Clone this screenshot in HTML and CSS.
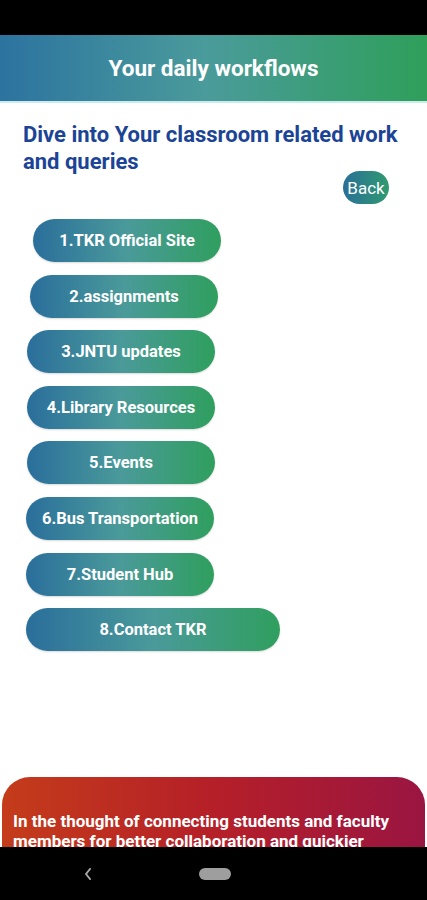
FILE: index.html
```html
<!DOCTYPE html>
<html lang="en">

<head>
    <meta charset="UTF-8">
    <meta name="viewport" content="width=device-width, initial-scale=1.0">
    <title>Your daily workflows</title>
    <link rel="stylesheet" href="styles.css">
</head>

<body>
    <div class="status-bar"></div>

    <header class="top-bar">
        <h1>Your daily workflows</h1>
    </header>

    <h2 class="intro">Dive into Your classroom related work and queries</h2>

    <div class="back-row">
        <button class="back-btn">Back</button>
    </div>

    <div class="links">
        <button class="link-btn">1.TKR Official Site</button>
        <button class="link-btn">2.assignments</button>
        <button class="link-btn">3.JNTU updates</button>
        <button class="link-btn">4.Library Resources</button>
        <button class="link-btn">5.Events</button>
        <button class="link-btn">6.Bus Transportation</button>
        <button class="link-btn">7.Student Hub</button>
        <button class="link-btn wide">8.Contact TKR</button>
    </div>

    <div class="about-card">
        <p>In the thought of connecting students and faculty members for better collaboration and quickier communication between them.</p>
    </div>

    <nav class="nav-bar">
        <svg class="nav-back" width="8" height="12" viewBox="0 0 8 12">
            <path d="M6 1 L2 6 L6 11" fill="none" stroke="#a8a8a8" stroke-width="2" stroke-linecap="round" stroke-linejoin="round"/>
        </svg>
        <span class="nav-home"></span>
    </nav>
</body>

</html>
```

FILE: styles.css
```css
body {
    margin: 0;
    padding: 0;
    background-color: #ffffff;
    font-family: Roboto, "Liberation Sans", sans-serif;
    overflow: hidden;
}

.status-bar {
    height: 35px;
    background-color: #000000;
}

.top-bar {
    height: 66px;
    background: linear-gradient(90deg, #2c73a0 0%, #4a9b9b 48%, #2f9f5a 100%);
    border-bottom: 2px solid #c9ecef;
    display: flex;
    align-items: center;
    justify-content: center;
}

.top-bar h1 {
    margin: 0;
    color: #ffffff;
    font-size: 22.5px;
    font-weight: 700;
}

.intro {
    margin: 18px 18px 0 23px;
    color: #1c4496;
    font-size: 22px;
    font-weight: 700;
    line-height: 27px;
}

.back-row {
    display: flex;
    justify-content: flex-end;
    padding-right: 38px;
    margin-top: -4px;
}

.back-btn {
    width: 46px;
    height: 33px;
    border: none;
    border-radius: 17px;
    background: linear-gradient(90deg, #2a6f98, #2f9a70);
    color: #ffffff;
    font-family: Roboto, "Liberation Sans", sans-serif;
    font-size: 17px;
    padding: 0;
}

.links {
    display: flex;
    flex-direction: column;
    align-items: flex-start;
    gap: 12.6px;
    margin-top: 15px;
}

.link-btn {
    width: 188px;
    height: 43px;
    border: none;
    border-radius: 22px;
    background: linear-gradient(90deg, #2a6e9b 0%, #4a9a9a 50%, #2f9f5e 100%);
    color: #ffffff;
    font-family: Roboto, "Liberation Sans", sans-serif;
    font-size: 16.5px;
    font-weight: 700;
    padding: 0;
    box-shadow: 0 1px 2px rgba(0, 0, 0, 0.15);
}

.link-btn:nth-child(1) { margin-left: 33px; }
.link-btn:nth-child(2) { margin-left: 30px; }
.link-btn:nth-child(3) { margin-left: 27px; }
.link-btn:nth-child(4) { margin-left: 27px; }
.link-btn:nth-child(5) { margin-left: 27px; }
.link-btn:nth-child(6) { margin-left: 26px; }
.link-btn:nth-child(7) { margin-left: 26px; }
.link-btn:nth-child(8) { margin-left: 26px; }

.link-btn.wide {
    width: 254px;
}

.about-card {
    margin: 126px 2px 0 2px;
    height: 200px;
    border-radius: 28px 28px 0 0;
    background: linear-gradient(90deg, #c43c1a 0%, #b51f28 50%, #9a1542 100%);
    padding: 34px 12px 0 11px;
}

.about-card p {
    margin: 0;
    color: #ffffff;
    font-size: 17px;
    font-weight: 700;
    line-height: 20px;
}

.nav-bar {
    position: fixed;
    left: 0;
    right: 0;
    bottom: 0;
    height: 53px;
    background-color: #000000;
}

.nav-back {
    position: absolute;
    left: 84px;
    top: 21px;
}

.nav-home {
    position: absolute;
    left: 199px;
    top: 21px;
    width: 32px;
    height: 12px;
    border-radius: 6px;
    background-color: #9e9e9e;
}
```
